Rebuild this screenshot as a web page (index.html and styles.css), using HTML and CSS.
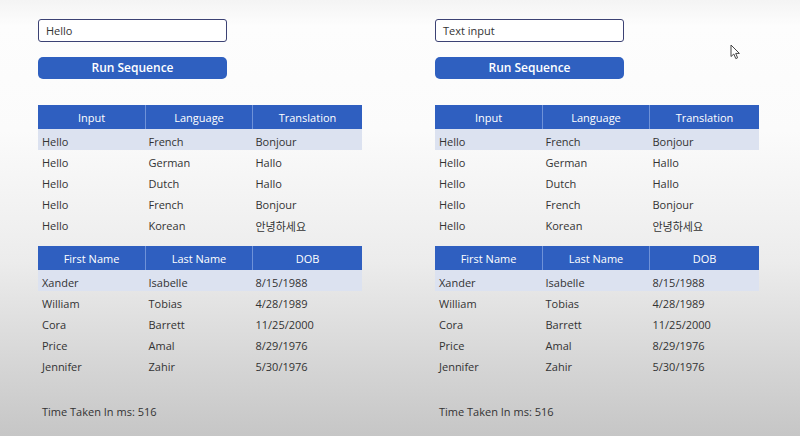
FILE: index.html
```html
<!DOCTYPE html>
<html lang="en">
<head>
    <meta charset="UTF-8">
    <title>Translate Sequence</title>
    <link rel="stylesheet" href="styles.css">
</head>
<body>
    <div class="screen">
        <div class="panel">
            <div class="text-input">Hello</div>
            <button class="run-btn">Run Sequence</button>

            <table class="grid">
                <thead>
                    <tr><th class="c1">Input</th><th class="c2">Language</th><th class="c3">Translation</th></tr>
                </thead>
                <tbody>
                    <tr class="selected"><td>Hello</td><td>French</td><td>Bonjour</td></tr>
                    <tr><td>Hello</td><td>German</td><td>Hallo</td></tr>
                    <tr><td>Hello</td><td>Dutch</td><td>Hallo</td></tr>
                    <tr><td>Hello</td><td>French</td><td>Bonjour</td></tr>
                    <tr><td>Hello</td><td>Korean</td><td>안녕하세요</td></tr>
                </tbody>
            </table>

            <table class="grid people">
                <thead>
                    <tr><th class="c1">First Name</th><th class="c2">Last Name</th><th class="c3">DOB</th></tr>
                </thead>
                <tbody>
                    <tr class="selected"><td>Xander</td><td>Isabelle</td><td>8/15/1988</td></tr>
                    <tr><td>William</td><td>Tobias</td><td>4/28/1989</td></tr>
                    <tr><td>Cora</td><td>Barrett</td><td>11/25/2000</td></tr>
                    <tr><td>Price</td><td>Amal</td><td>8/29/1976</td></tr>
                    <tr><td>Jennifer</td><td>Zahir</td><td>5/30/1976</td></tr>
                </tbody>
            </table>

            <p class="timer">Time Taken In ms: 516</p>
        </div>

        <div class="panel">
            <div class="text-input">Text input</div>
            <button class="run-btn">Run Sequence</button>

            <table class="grid">
                <thead>
                    <tr><th class="c1">Input</th><th class="c2">Language</th><th class="c3">Translation</th></tr>
                </thead>
                <tbody>
                    <tr class="selected"><td>Hello</td><td>French</td><td>Bonjour</td></tr>
                    <tr><td>Hello</td><td>German</td><td>Hallo</td></tr>
                    <tr><td>Hello</td><td>Dutch</td><td>Hallo</td></tr>
                    <tr><td>Hello</td><td>French</td><td>Bonjour</td></tr>
                    <tr><td>Hello</td><td>Korean</td><td>안녕하세요</td></tr>
                </tbody>
            </table>

            <table class="grid people">
                <thead>
                    <tr><th class="c1">First Name</th><th class="c2">Last Name</th><th class="c3">DOB</th></tr>
                </thead>
                <tbody>
                    <tr class="selected"><td>Xander</td><td>Isabelle</td><td>8/15/1988</td></tr>
                    <tr><td>William</td><td>Tobias</td><td>4/28/1989</td></tr>
                    <tr><td>Cora</td><td>Barrett</td><td>11/25/2000</td></tr>
                    <tr><td>Price</td><td>Amal</td><td>8/29/1976</td></tr>
                    <tr><td>Jennifer</td><td>Zahir</td><td>5/30/1976</td></tr>
                </tbody>
            </table>

            <p class="timer">Time Taken In ms: 516</p>
        </div>

        <!-- mouse pointer -->
        <svg class="cursor" width="12" height="16" viewBox="0 0 12 16">
            <path d="M1 1 L1 12.5 L3.8 10 L5.8 14.6 L7.6 13.8 L5.7 9.4 L9.4 9.4 Z" fill="#fff" stroke="#444" stroke-width="1" stroke-linejoin="round"/>
        </svg>
    </div>
</body>
</html>
```

FILE: styles.css
```css
html, body {
    margin: 0;
    padding: 0;
    height: 100%;
}
body {
    font-family: "Open Sans", "Noto Sans CJK KR", sans-serif;
    color: #333;
    background: linear-gradient(to bottom, #f4f4f4 0%, #fdfdfd 6%, #fbfbfb 30%, #ececec 60%, #c6c6c6 100%);
}
.screen {
    position: relative;
    display: flex;
    height: 436px;
    overflow: hidden;
}
.panel {
    width: 397px;
    padding: 19px 0 0 38px;
    box-sizing: border-box;
}
.text-input {
    width: 189px;
    height: 23px;
    box-sizing: border-box;
    border: 1.5px solid #3c4274;
    border-radius: 3px;
    background: #fff;
    font-size: 11px;
    line-height: 21px;
    padding-left: 7px;
    color: #333;
}
.run-btn {
    display: block;
    width: 189px;
    height: 22px;
    margin-top: 15px;
    border: none;
    border-radius: 5px;
    background-color: #2f60c0;
    color: #fff;
    font-family: "Open Sans", sans-serif;
    font-size: 12px;
    font-weight: 600;
    padding: 0;
    line-height: 22px;
}
.grid {
    width: 324px;
    border-collapse: collapse;
    margin-top: 26px;
    table-layout: fixed;
    font-size: 11px;
}
.grid.people {
    margin-top: 12px;
}
.grid th {
    height: 24px;
    padding: 0;
    background-color: #2f5fc0;
    color: #fff;
    font-weight: 400;
    text-align: center;
    border-left: 1px solid #6f92d8;
}
.grid th.c1 {
    width: 107px;
    border-left: none;
}
.grid th.c2 {
    width: 106px;
}
.grid td {
    height: 17px;
    padding: 4px 0 0 4px;
    white-space: nowrap;
}
.grid td + td {
    padding-left: 3px;
}
.grid tr.selected td {
    background-color: #dce2f0;
}
.timer {
    margin: 30px 0 0 4px;
    font-size: 11px;
    line-height: 14px;
    color: #333;
}
.cursor {
    position: absolute;
    left: 730px;
    top: 44px;
}
```
